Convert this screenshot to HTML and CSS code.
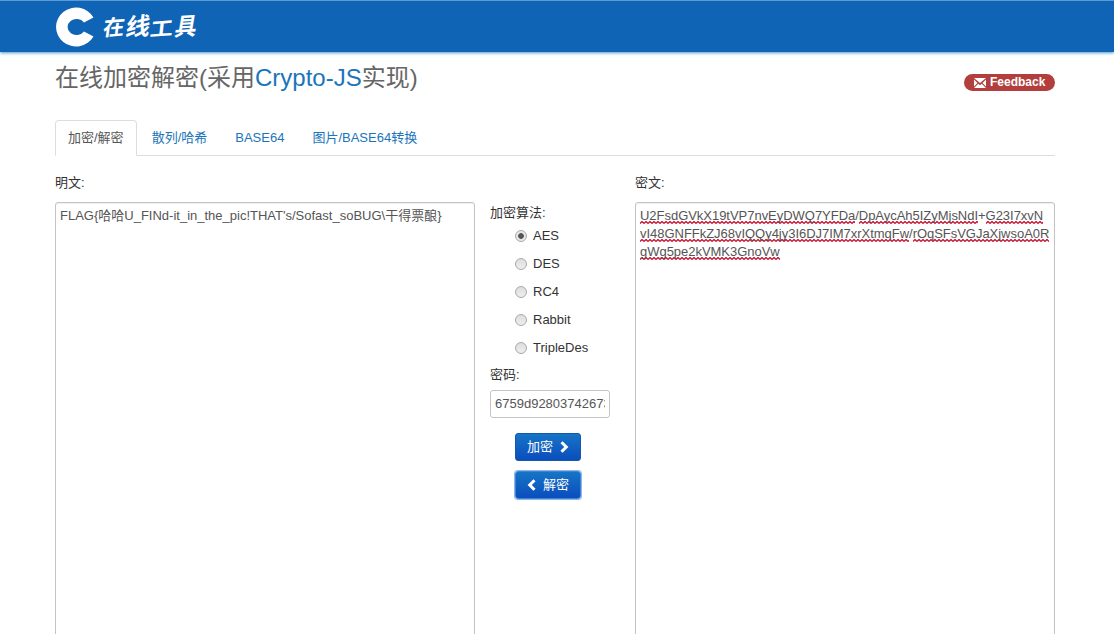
FILE: index.html
```html
<!DOCTYPE html>
<html lang="zh-CN">
<head>
<meta charset="utf-8">
<title>在线加密解密</title>
<link rel="stylesheet" href="styles.css">
</head>
<body>
<header class="navbar">
  <div class="container brand">
    <svg class="brand-mark" width="40" height="40" viewBox="0 0 40 40"><path d="M38.500 10.500A20 19.500 0 1 0 38.500 29.500L29 24.500A9 8 0 1 1 29 15.500Z" fill="#fff"/></svg>
    <span class="brand-name"><span class="c1">在</span><span class="c2">线</span><span class="c3">工</span><span class="c4">具</span></span>
  </div>
</header>
<main class="container">
  <div class="heading">
    <h1>在线加密解密(采用<a>Crypto-JS</a>实现)</h1>
    <a class="feedback"><svg width="12" height="10" viewBox="0 0 12 10"><path d="M0 0H12L6 5ZM0 1.500L3.500 5L0 8.500ZM12 1.500L8.500 5L12 8.500ZM0 10L4.300 5.800L6 7.200L7.700 5.800L12 10Z" fill="#fff"/></svg><span>Feedback</span></a>
  </div>
  <nav class="tabs">
    <a class="tab active">加密/解密</a><a class="tab">散列/哈希</a><a class="tab">BASE64</a><a class="tab">图片/BASE64转换</a>
  </nav>
  <div class="columns">
    <section class="text-col">
      <div class="label">明文:</div>
      <div class="area"><span class="plain">FLAG{哈哈U_FINd-it_in_the_pic!THAT's/Sofast_soBUG\干得票酿}</span></div>
    </section>
    <section class="options">
      <div class="label">加密算法:</div>
      <div class="radios">
        <label class="radio"><i class="dot on"></i>AES</label>
        <label class="radio"><i class="dot"></i>DES</label>
        <label class="radio"><i class="dot"></i>RC4</label>
        <label class="radio"><i class="dot"></i>Rabbit</label>
        <label class="radio"><i class="dot"></i>TripleDes</label>
      </div>
      <div class="label">密码:</div>
      <div class="password"><div class="clip">6759d92803742673</div></div>
      <div class="buttons">
        <button class="btn">加密<svg class="after" width="9" height="12" viewBox="0 0 9 12"><path d="M1.500 1.200L6.300 6L1.500 10.800" fill="none" stroke="#fff" stroke-width="3"/></svg></button>
        <button class="btn focused"><svg class="before" width="9" height="12" viewBox="0 0 9 12"><path d="M7.500 1.200L2.700 6L7.500 10.800" fill="none" stroke="#fff" stroke-width="3"/></svg>解密</button>
      </div>
    </section>
    <section class="text-col">
      <div class="label">密文:</div>
      <div class="area cipher"><span class="misspelt">U2FsdGVkX19tVP7nvEyDWQ7YFDa</span>/<span class="misspelt">DpAycAh5IZyMjsNdI</span>+<span class="misspelt">G23I7xvN</span><br><span class="misspelt">vI48GNFFkZJ68vIQQy4jy3I6DJ7IM7xrXtmqFw</span>/<span class="misspelt">rOqSFsVGJaXjwsoA0R</span><br><span class="misspelt">gWg5pe2kVMK3GnoVw</span></div>
    </section>
  </div>
</main>
</body>
</html>
```
FILE: styles.css
```css
* { box-sizing: border-box; }
body {
  margin: 0;
  height: 634px;
  overflow: hidden;
  background: #fff;
  color: #333;
  font: 13px/18px "Liberation Sans", "Noto Sans CJK SC", sans-serif;
}
a { color: #1a75bb; text-decoration: none; }
.container { width: 1000px; margin: 0 auto; transform: translateX(-2px); }
.navbar {
  height: 52px;
  background: #1064b5;
  border-top: 1px solid #5b9bd5;
  box-shadow: 0 1px 3px #4a96d0;
}
.brand { display: flex; align-items: center; height: 51px; }
.brand-name {
  display: flex;
  margin-left: 7px;
  color: #fff;
  font-size: 24px;
  font-weight: 700;
  line-height: 30px;
  transform: skewX(-12deg);
}
.c1 { transform: translateY(1px) scale(.88, .9) rotate(-5deg); }
.c2 { transform: scale(1, 1.02) rotate(-4deg); }
.c3 { transform: translateY(2px) scale(.95, .82) rotate(-5deg); }
.c4 { transform: scale(.9, 1.02) rotate(-3deg); }
.heading { display: flex; justify-content: space-between; height: 68px; padding-top: 8px; }
h1 { margin: 0; color: #666; font-size: 24px; font-weight: 400; line-height: 36px; white-space: nowrap; }
.feedback {
  display: flex;
  align-items: center;
  gap: 4px;
  width: 91px;
  height: 17px;
  margin-top: 14px;
  padding-left: 10px;
  border-radius: 9px;
  background: #b33e3e;
  color: #fff;
  font-size: 12px;
  font-weight: 700;
  line-height: 17px;
}
.tabs { display: flex; height: 36px; border-bottom: 1px solid #ddd; }
.tab { height: 36px; margin-right: 2px; padding: 8px 12px; border: 1px solid transparent; white-space: nowrap; }
.active { color: #555; background: #fff; border-color: #ddd #ddd #fff; border-radius: 4px 4px 0 0; }
.columns { display: flex; gap: 15px; padding-top: 18px; }
.text-col { width: 420px; }
.text-col .label { margin-bottom: 10px; }
.area {
  height: 460px;
  padding: 4px;
  border: 1px solid #c4c4c4;
  border-radius: 3px;
  box-shadow: inset 0 1px 1px #0001;
  color: #555;
  white-space: nowrap;
}
.cipher { letter-spacing: -.03px; }
.misspelt {
  padding-bottom: 1px;
  background: url("data:image/svg+xml,%3Csvg xmlns='http://www.w3.org/2000/svg' width='4' height='3'%3E%3Cpath d='M0 2.500L2 .5L4 2.500' fill='none' stroke='%23c8102e' stroke-width='1.3'/%3E%3C/svg%3E") 0 100% repeat-x;
}
.options { width: 130px; padding-top: 30px; }
.radios { padding: 0 0 4px 25px; }
.radio { display: flex; align-items: center; height: 28px; }
.dot {
  width: 12px;
  height: 12px;
  margin-right: 6px;
  border: 1px solid #aaa;
  border-radius: 50%;
  background: linear-gradient(#ddd, #eee);
}
.on { background: radial-gradient(circle, #555 0 2.5px, #e7e7e7 3.2px); }
.password { width: 120px; height: 28px; margin-top: 6px; padding: 4px; border: 1px solid #c4c4c4; border-radius: 3px; color: #555; }
.clip { overflow: hidden; white-space: nowrap; }
.buttons { display: flex; flex-direction: column; gap: 10px; padding: 15px 0 0 25px; }
.btn {
  display: flex;
  align-items: center;
  justify-content: center;
  width: 66px;
  height: 28px;
  padding: 0;
  border: 1px solid #1258ac;
  border-radius: 3px;
  background: linear-gradient(#1674c6, #0b4dbd);
  color: #fff;
  font: inherit;
}
.focused { border-color: #3f83d8; box-shadow: 0 0 0 1px #8db8ea; }
.after { margin-left: 7px; }
.before { margin-right: 7px; }
```
